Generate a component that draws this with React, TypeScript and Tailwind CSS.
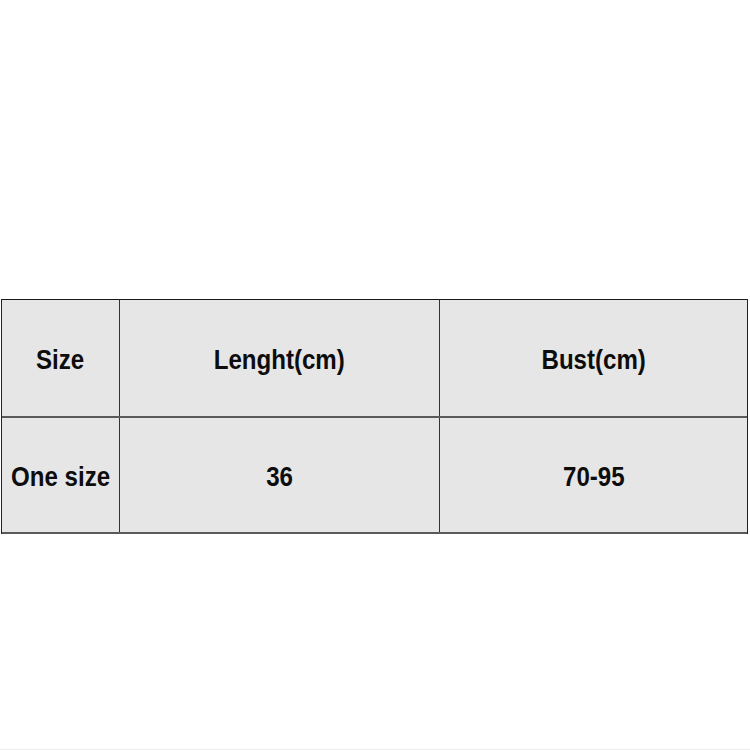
const rows = [
  ['Size', 'Lenght(cm)', 'Bust(cm)'],
  ['One size', '36', '70-95'],
]

function Cell({ text }: { text: string }) {
  return (
    <div className="flex items-center justify-center bg-[#e6e6e6] pt-[4px]">
      <span className="inline-block scale-x-[0.86] whitespace-nowrap text-[28px] font-bold text-[#0d0d0d]">
        {text}
      </span>
    </div>
  )
}

export default function App() {
  return (
    <div className="h-[750px] w-[750px] bg-white pt-[299px] border-b border-[#ececec]">
      <div
        className="ml-[1px] w-[747px] border-t border-[#1a1a1a] border-l border-r border-l-[#222] border-r-[#222]"
        style={{ fontFamily: '"Liberation Sans", Arial, sans-serif' }}
      >
        {rows.map((row, i) => (
          <div
            key={i}
            className={`grid grid-cols-[117px_1px_319px_1px_307px] border-b-2 border-[#5a5a5a] ${i === 0 ? 'h-[118px]' : 'h-[116px]'}`}
          >
            <Cell text={row[0]} />
            <div className="bg-[#333]" />
            <Cell text={row[1]} />
            <div className="bg-[#333]" />
            <Cell text={row[2]} />
          </div>
        ))}
      </div>
    </div>
  )
}
